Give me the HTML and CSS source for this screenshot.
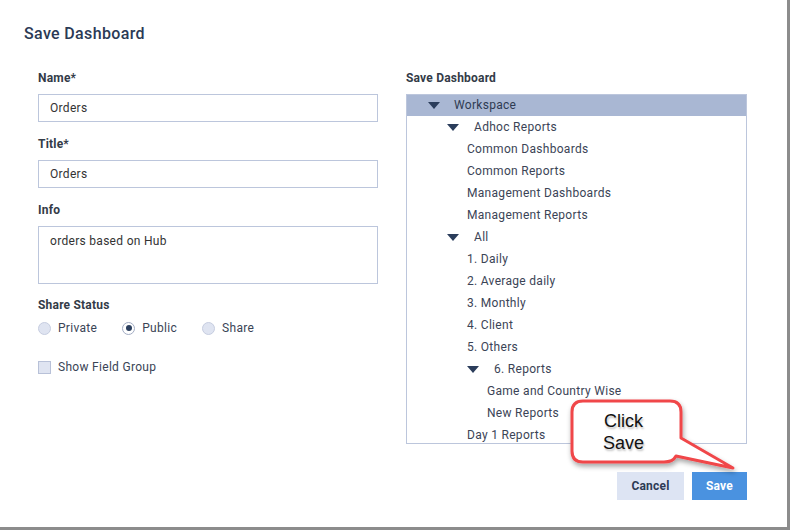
FILE: index.html
```html
<!DOCTYPE html>
<html>
<head>
<meta charset="utf-8">
<link rel="stylesheet" href="styles.css">
</head>
<body>
<div class="frame">
  <div class="dialog">
    <h2 class="title">Save Dashboard</h2>
    <div class="body">
      <div class="col">
        <div class="label">Name*</div>
        <div class="input">Orders</div>
        <div class="label gap">Title*</div>
        <div class="input">Orders</div>
        <div class="label gap">Info</div>
        <div class="input area">orders based on Hub</div>
        <div class="label gap2">Share Status</div>
        <div class="radios">
          <span class="radio"><span class="dot"></span>Private</span>
          <span class="radio"><span class="dot on"></span>Public</span>
          <span class="radio"><span class="dot"></span>Share</span>
        </div>
        <div class="check"><span class="box"></span>Show Field Group</div>
      </div>
      <div class="col">
        <div class="label">Save Dashboard</div>
        <div class="tree">
          <div class="row sel f0"><svg class="caret" viewBox="0 0 12 7"><path d="M0 0H12L6 7Z"/></svg>Workspace</div>
          <div class="row f1"><svg class="caret" viewBox="0 0 12 7"><path d="M0 0H12L6 7Z"/></svg>Adhoc Reports</div>
          <div class="row l1">Common Dashboards</div>
          <div class="row l1">Common Reports</div>
          <div class="row l1">Management Dashboards</div>
          <div class="row l1">Management Reports</div>
          <div class="row f1"><svg class="caret" viewBox="0 0 12 7"><path d="M0 0H12L6 7Z"/></svg>All</div>
          <div class="row l1">1. Daily</div>
          <div class="row l1">2. Average daily</div>
          <div class="row l1">3. Monthly</div>
          <div class="row l1">4. Client</div>
          <div class="row l1">5. Others</div>
          <div class="row f2"><svg class="caret" viewBox="0 0 12 7"><path d="M0 0H12L6 7Z"/></svg>6. Reports</div>
          <div class="row l2">Game and Country Wise</div>
          <div class="row l2">New Reports</div>
          <div class="row l1">Day 1 Reports</div>
        </div>
      </div>
    </div>
    <div class="footer">
      <button class="btn cancel">Cancel</button>
      <button class="btn save">Save</button>
    </div>
  </div>
  <div class="callout">
    <svg class="bubble" viewBox="0 0 190 90" width="190" height="90">
      <defs>
        <filter id="sh" x="-20%" y="-20%" width="140%" height="150%">
          <feDropShadow dx="1" dy="3" stdDeviation="2.5" flood-color="#000" flood-opacity="0.35"/>
        </filter>
      </defs>
      <path d="M23 11 H110 Q121 11 121 22 V48 L173 78 L116 66 Q113 72 104 72 H23 Q12 72 12 61 V22 Q12 11 23 11 Z" fill="#fff" stroke="#f0464a" stroke-width="3" stroke-linejoin="round" filter="url(#sh)"/>
    </svg>
    <div class="callout-text">Click<br>Save</div>
  </div>
</div>
</body>
</html>
```
FILE: styles.css
```css
* { box-sizing: border-box; }
html, body { margin: 0; padding: 0; background: #fff; }
body { font-family: Roboto, "Liberation Sans", sans-serif; color: #333; }
.frame {
  position: relative;
  width: 790px;
  height: 530px;
  border-right: 3px solid #8c8c8c;
  border-bottom: 3px solid #8c8c8c;
  background: #fff;
}
.dialog { padding: 24px 0 0 24px; }
.title {
  margin: 0;
  font-size: 16px;
  line-height: 20px;
  font-weight: 500;
  letter-spacing: 0.35px;
  color: #2b3a55;
}
.body {
  display: grid;
  grid-template-columns: 340px 341px;
  column-gap: 28px;
  margin: 26px 0 0 14px;
}
.col { display: flex; flex-direction: column; }
.label {
  font-size: 12px;
  line-height: 16px;
  font-weight: 700;
  letter-spacing: 0.2px;
  color: #333b47;
  margin-bottom: 8px;
}
.label.gap { margin-top: 14px; }
.label.gap2 { margin-top: 13px; margin-bottom: 7px; }
.input {
  height: 28px;
  border: 1px solid #bcc6dc;
  padding: 0 11px;
  font-size: 12px;
  line-height: 26px;
  letter-spacing: 0.3px;
  color: #333;
}
.input.area { height: 58px; padding-top: 1px; }
.radios { display: flex; height: 16px; align-items: center; }
.radio {
  display: flex;
  align-items: center;
  font-size: 12px;
  letter-spacing: 0.3px;
  color: #3a4456;
  margin-right: 25px;
}
.dot {
  width: 13px;
  height: 13px;
  border-radius: 50%;
  background: #dfe4f1;
  border: 1px solid #c6cde0;
  margin-right: 7px;
  position: relative;
}
.dot.on { background: #fff; border-color: #a3adc4; }
.dot.on::after {
  content: "";
  position: absolute;
  left: 2.5px;
  top: 2.5px;
  width: 6px;
  height: 6px;
  border-radius: 50%;
  background: #2b3f5e;
}
.check {
  display: flex;
  align-items: center;
  margin-top: 24px;
  font-size: 12px;
  letter-spacing: 0.3px;
  color: #3a4456;
}
.box {
  width: 13px;
  height: 13px;
  background: #dfe4f1;
  border: 1px solid #b8c1d8;
  margin-right: 7px;
}
.tree {
  height: 350px;
  border: 1px solid #bcc6dc;
  overflow: hidden;
}
.row {
  height: 22px;
  line-height: 22px;
  font-size: 12px;
  letter-spacing: 0.3px;
  color: #3b4456;
  display: flex;
  align-items: center;
  white-space: nowrap;
}
.row:first-child { margin-top: -1px; }
.row.sel { background: #a9b7d3; color: #2f3b52; }
.caret { width: 12px; height: 7px; fill: #2b3d5b; flex: none; }
.f0 { padding-left: 21px; }
.f0 .caret { margin-right: 14px; }
.f1 { padding-left: 40px; }
.f1 .caret { margin-right: 15px; }
.l1 { padding-left: 60px; }
.f2 { padding-left: 60px; }
.f2 .caret { margin-right: 15px; }
.l2 { padding-left: 80px; }
.footer {
  display: flex;
  justify-content: flex-end;
  gap: 8px;
  width: 723px;
  margin-top: 28px;
}
.btn {
  height: 28px;
  border: none;
  font-family: Roboto, "Liberation Sans", sans-serif;
  font-size: 12px;
  font-weight: 700;
  letter-spacing: 0.2px;
  padding: 0;
  cursor: pointer;
}
.cancel { width: 67px; background: #dde4f3; color: #2d3b55; }
.save { width: 55px; background: #4a92e0; color: #fff; }
.callout {
  position: absolute;
  left: 560px;
  top: 390px;
  width: 190px;
  height: 90px;
}
.bubble { display: block; }
.callout-text {
  position: absolute;
  left: 9px;
  top: 20px;
  width: 109px;
  text-align: center;
  font-family: "Liberation Sans", Arial, sans-serif;
  font-size: 18px;
  line-height: 22px;
  color: #111;
  text-shadow: 1px 2px 2px rgba(0,0,0,0.25);
}
```
